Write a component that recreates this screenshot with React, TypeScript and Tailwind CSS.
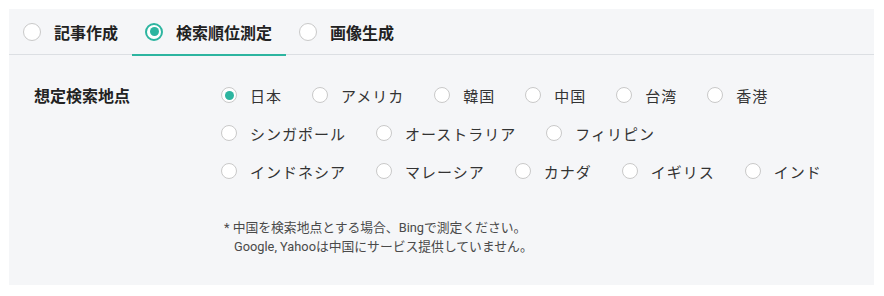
import React from 'react'

const tabs = ['記事作成', '検索順位測定', '画像生成']

const rows = [
  ['日本', 'アメリカ', '韓国', '中国', '台湾', '香港'],
  ['シンガポール', 'オーストラリア', 'フィリピン'],
  ['インドネシア', 'マレーシア', 'カナダ', 'イギリス', 'インド'],
]

const TabRadio = ({ checked }: { checked: boolean }) =>
  checked ? (
    <span className="flex h-[18px] w-[18px] items-center justify-center rounded-full border-2 border-[#2db5a0] bg-white">
      <span className="h-[9px] w-[9px] rounded-full bg-[#2db5a0]" />
    </span>
  ) : (
    <span className="h-[18px] w-[18px] rounded-full border border-[#c9c9c9] bg-white" />
  )

const Radio = ({ checked }: { checked: boolean }) => (
  <span className="flex h-[16px] w-[16px] shrink-0 items-center justify-center rounded-full border border-[#c9c9c9] bg-white">
    {checked && <span className="h-[9px] w-[9px] rounded-full bg-[#2db5a0]" />}
  </span>
)

const App = () => {
  const active = 1
  const selected = '日本'

  return (
    <div className="h-[296px] w-[884px] bg-white pt-[9px] pl-[9px] font-['Noto_Sans_CJK_JP',sans-serif]">
      <div className="h-[276px] w-[865px] bg-[#f5f6f8]">
        {/* tabs */}
        <div className="flex h-[46px] border-b border-[#dcdfe3] pl-px">
          {tabs.map((t, i) => (
            <div
              key={t}
              className={
                'relative -mb-px flex h-[47px] cursor-pointer items-center gap-[13px] border-b-2 pr-[14px] pl-[13px] ' +
                (i === active ? 'border-[#2db5a0]' : 'border-transparent')
              }
            >
              <TabRadio checked={i === active} />
              <span className="text-[16px] leading-none font-bold text-[#222]">{t}</span>
            </div>
          ))}
        </div>

        {/* body */}
        <div className="flex pt-[21px] pl-[25px]">
          <div className="flex h-[38px] w-[187px] shrink-0 items-center text-[16px] font-bold text-[#222]">
            想定検索地点
          </div>
          <div>
            {rows.map((row, r) => (
              <div key={r} className="flex h-[38px] items-center gap-x-[30px]">
                {row.map((c) => (
                  <label key={c} className="flex cursor-pointer items-center gap-[13px]">
                    <Radio checked={c === selected} />
                    <span className="text-[15px] leading-none tracking-[1px] text-[#333]">{c}</span>
                  </label>
                ))}
              </div>
            ))}
            <div className="mt-[28px] ml-[3px] font-['Roboto','Noto_Sans_CJK_JP',sans-serif] text-[12.8px] leading-[19px] text-[#4a4a4a]">
              <div>* 中国を検索地点とする場合、Bingで測定ください。</div>
              <div className="pl-[10px]">Google, Yahooは中国にサービス提供していません。</div>
            </div>
          </div>
        </div>
      </div>
    </div>
  )
}

export default App
